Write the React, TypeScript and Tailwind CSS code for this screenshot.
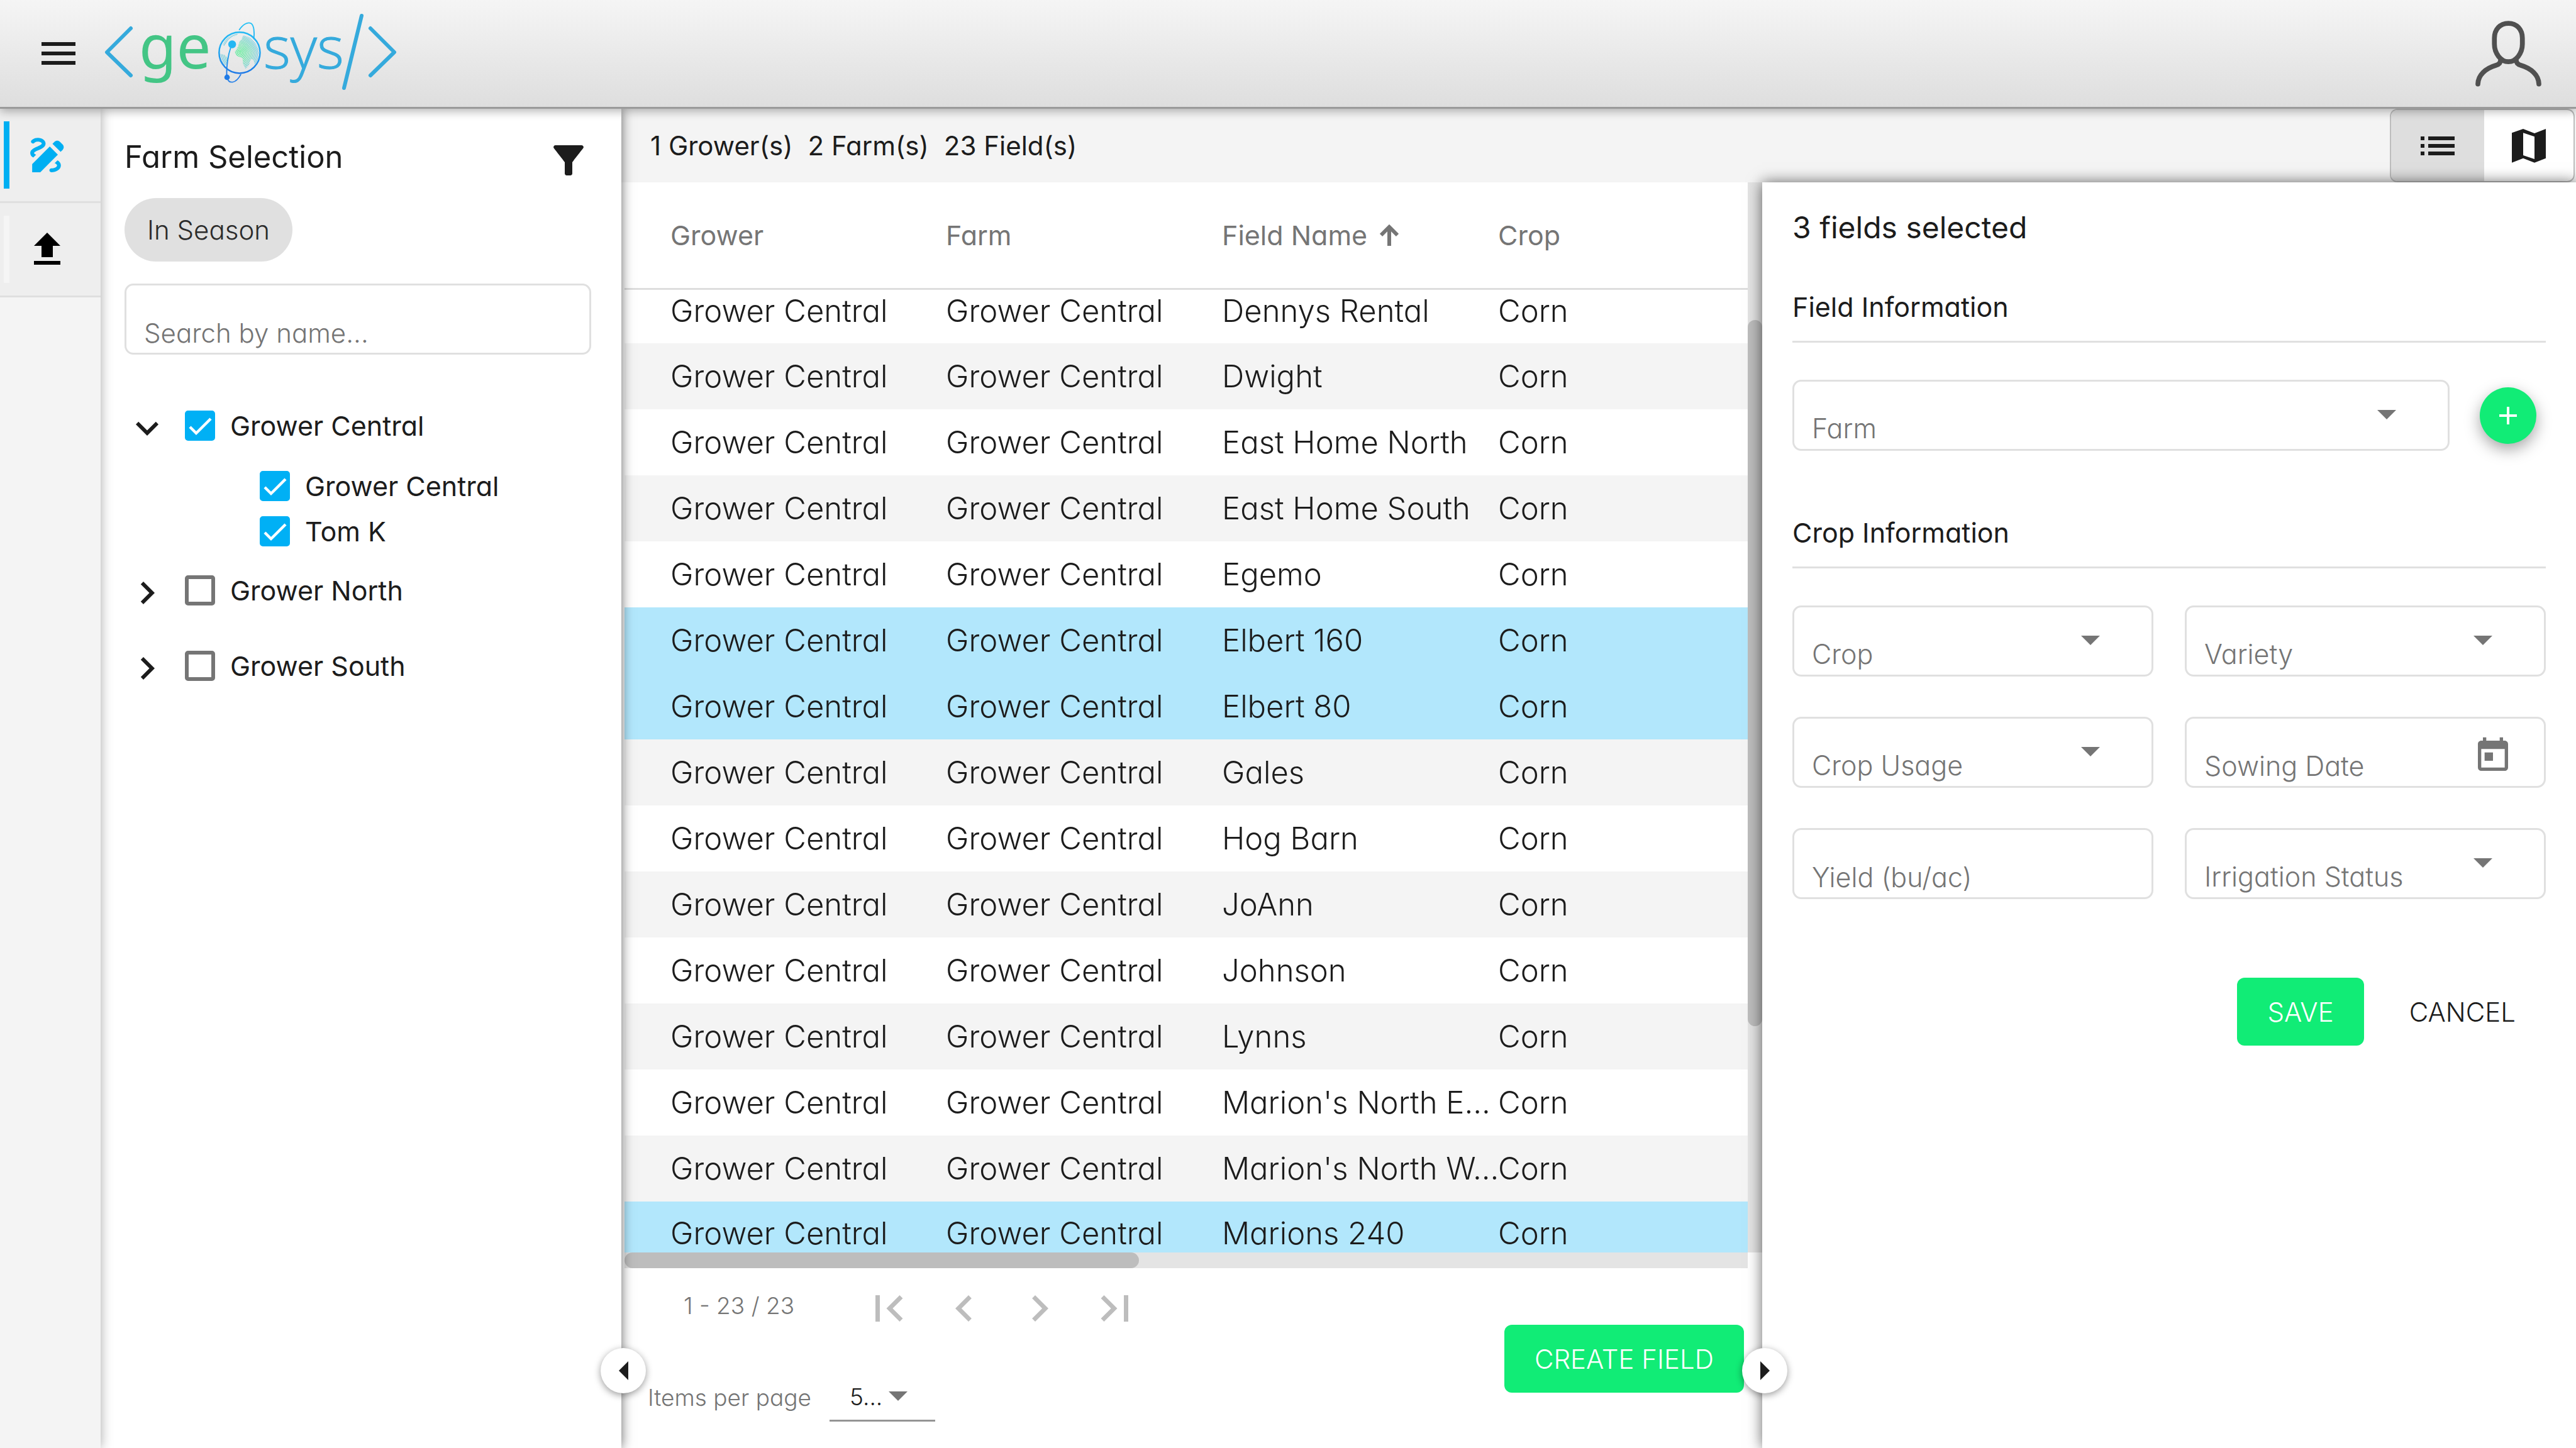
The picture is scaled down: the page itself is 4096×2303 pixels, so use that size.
import React from "react";
import {
  MdChevronLeft,
  MdChevronRight,
  MdDraw,
  MdExpandMore,
  MdFileUpload,
  MdFilterAlt,
  MdFirstPage,
  MdLastPage,
  MdList,
  MdMenu,
  MdToday,
} from "react-icons/md";

type Field = { name: string; selected?: boolean };

const FIELDS: Field[] = [
  { name: "Dennys Rental" },
  { name: "Dwight" },
  { name: "East Home North" },
  { name: "East Home South" },
  { name: "Egemo" },
  { name: "Elbert 160", selected: true },
  { name: "Elbert 80", selected: true },
  { name: "Gales" },
  { name: "Hog Barn" },
  { name: "JoAnn" },
  { name: "Johnson" },
  { name: "Lynns" },
  { name: "Marion's North E..." },
  { name: "Marion's North W..." },
  { name: "Marions 240", selected: true },
];

function Logo() {
  return (
    <svg viewBox="0 0 480 171" className="h-[171px] w-[480px]" role="img" aria-label="geosys">
      <defs>
        <linearGradient id="orbit" x1="0" y1="20" x2="0" y2="335" gradientUnits="userSpaceOnUse">
          <stop offset="0" stopColor="#25c3f5" />
          <stop offset="0.45" stopColor="#1fa9f0" />
          <stop offset="0.85" stopColor="#1f78e6" />
          <stop offset="1" stopColor="#2f86e8" />
        </linearGradient>
        <radialGradient id="land" cx="150" cy="180" r="90" gradientUnits="userSpaceOnUse">
          <stop offset="0" stopColor="#4df08c" />
          <stop offset="0.5" stopColor="#74e3b4" />
          <stop offset="1" stopColor="#7fcfe0" />
        </radialGradient>
        <clipPath id="continents">
          <path d="M122 178 L140 150 L146 125 L158 112 L166 92 C195 92 228 118 244 160 C250 200 240 225 226 240 L218 215 L205 212 L196 245 L178 262 L166 238 L163 208 L134 196 Z" />
          <path d="M62 140 C75 108 105 84 140 82 L132 92 L108 100 L92 112 L70 146 Z" />
          <path d="M50 185 L72 192 L92 212 L86 238 L72 245 C58 228 50 205 50 185 Z" />
        </clipPath>
      </defs>
      <g fill="none" stroke="#35aadc" strokeWidth="6" strokeLinecap="round" strokeLinejoin="round">
        <path d="M48 45 L10 83 L48 120" />
        <path d="M415 25 L387 140" />
        <path d="M429 45 L467 83 L429 120" />
      </g>
      <text x="61" y="109" fontSize="97" fill="#43c585" className="font-['Noto_Sans',sans-serif]">
        ge
      </text>
      <text x="259" y="109" fontSize="92" fill="#35aadc" stroke="#35aadc" strokeWidth="1" className="font-['Open_Sans',sans-serif] font-light">
        sys
      </text>
      <g transform="translate(175 28) scale(.3103)" fill="none" stroke="url(#orbit)" strokeLinecap="round">
        <g clipPath="url(#continents)" stroke="url(#land)" strokeWidth="4">
          {[6, 14, 22, 30, 38, 46, 54, 62, 70, 78, 86, 94, 102, 110].map((r) => (
            <path key={r} d={`M${150 - r} 178 Q${150 - r / 2} ${178 - r} 150 ${178 - r * 0.9} T${150 + r} 178 Q${150 + r * 0.7} ${178 + r} 150 ${178 + r} T${150 - r} 178`} />
          ))}
        </g>
        <circle cx="148" cy="180" r="105" strokeWidth="8" />
        <path d="M147 62 C165 35 190 20 207 30 C222 40 225 75 221 108" strokeWidth="6" />
        <path d="M105 145 C90 190 80 250 82 300" strokeWidth="6" />
        <path d="M84 306 C92 342 128 340 154 292" strokeWidth="6" />
        <circle cx="110" cy="137" r="20" fill="#23b7f3" stroke="none" />
        <circle cx="84" cy="306" r="14" fill="#1f7ae6" stroke="none" />
      </g>
    </svg>
  );
}

function Header() {
  return (
    <header className="relative z-30 flex h-[173px] shrink-0 items-center border-b-3 border-[#9a9a9a] bg-linear-to-b from-[#f5f5f5] to-[#dedede] pr-[55px] pl-[57px] shadow-[0_4px_14px_rgba(0,0,0,0.3)]">
      <button aria-label="Menu" className="mr-[31px]">
        <MdMenu className="size-[72px]" />
      </button>
      <Logo />
      <button aria-label="Account" className="ml-auto">
        <svg viewBox="743 95 340 340" className="size-[105px]" fill="none" stroke="#505050" strokeWidth="25" strokeLinecap="round">
          <path d="M913 108 C870 108 841 140 841 185 V215 C841 262 873 306 913 306 C953 306 985 262 985 215 V185 C985 140 956 108 913 108 Z" />
          <path d="M756 421 C757 375 795 340 850 324 C866 320 873 312 873 296" />
          <path d="M1070 421 C1069 375 1031 340 976 324 C960 320 953 312 953 296" />
        </svg>
      </button>
    </header>
  );
}

function SideNav() {
  return (
    <nav className="relative z-20 w-[160px] bg-[#f4f4f4] shadow-[0_0_18px_rgba(0,0,0,0.35)]">
      <button aria-label="Draw" className="flex h-[150px] w-full items-center border-b-3 border-[#dfdfdf] bg-[#eeeeee] pl-[6px] text-[#00aff2]">
        <span className="h-[107px] w-[9px] bg-[#00aff2]" />
        <MdDraw className="ml-6 size-[73px]" />
      </button>
      <button aria-label="Upload" className="flex h-[150px] w-full items-center border-b-3 border-[#dfdfdf] bg-[#eeeeee] pl-[6px] text-black">
        <span className="h-[107px] w-[9px] bg-[#f5f5f5]" />
        <MdFileUpload className="ml-6 size-[72px]" />
      </button>
    </nav>
  );
}

function TreeCheck({ label, checked }: { label: string; checked?: boolean }) {
  return (
    <label className="flex items-center gap-6 text-[43px] leading-[60px]">
      <span className="grid size-12 place-items-center">
        <input
          type="checkbox"
          defaultChecked={checked}
          className="peer col-start-1 row-start-1 size-12 appearance-none rounded-[5px] border-6 border-[#757575] checked:border-[#00b0f5] checked:bg-[#00b0f5]"
        />
        <svg viewBox="0 0 24 24" className="pointer-events-none col-start-1 row-start-1 hidden size-12 peer-checked:block" fill="none" stroke="#ffffff" strokeWidth="2.2">
          <path d="M4 13 L9 18 L20.5 6.500" />
        </svg>
      </span>
      {label}
    </label>
  );
}

function FarmPanel() {
  return (
    <section className="relative z-10 w-[828px] bg-white pr-12 pl-[38px] shadow-[0_0_18px_rgba(0,0,0,0.6)]">
      <div className="flex items-start justify-between pt-[46px]">
        <h1 className="text-[49px] leading-[62px]">Farm Selection</h1>
        <button aria-label="Filter">
          <MdFilterAlt className="size-[72px]" />
        </button>
      </div>
      <button className="mt-6 h-[101px] rounded-full bg-[#e0e0e0] px-9 text-[42px] font-light text-[#2b2b2b]">In Season</button>
      <input
        aria-label="Search by name"
        placeholder="Search by name..."
        className="mt-[35px] block h-[113px] w-full rounded-[14px] border-3 border-[#e0e0e0] px-7 pt-[44px] text-[42px] font-light placeholder:text-[#757575]"
      />
      <ul className="mt-[73px]">
        <li>
          <div className="flex items-center">
            <button aria-label="Collapse Grower Central" aria-expanded="true" className="mr-6">
              <MdExpandMore className="mt-2 size-[72px]" />
            </button>
            <TreeCheck label="Grower Central" checked />
          </div>
          <ul className="flex flex-col gap-3 pt-[26px] pb-1 pl-[215px]">
            <li>
              <TreeCheck label="Grower Central" checked />
            </li>
            <li>
              <TreeCheck label="Tom K" checked />
            </li>
          </ul>
        </li>
        <li className="flex h-[120px] items-center">
          <button aria-label="Expand Grower North" className="mr-6">
            <MdChevronRight className="mt-2 size-[72px]" />
          </button>
          <TreeCheck label="Grower North" />
        </li>
        <li className="flex h-[120px] items-center">
          <button aria-label="Expand Grower South" className="mr-6">
            <MdChevronRight className="mt-2 size-[72px]" />
          </button>
          <TreeCheck label="Grower South" />
        </li>
      </ul>
      <button aria-label="Collapse farm panel" className="absolute -right-[39px] bottom-[87px] grid size-[72px] place-items-center rounded-full bg-white shadow-[0_3px_12px_rgba(0,0,0,0.4)]">
        <svg viewBox="0 0 15 30" className="h-[30px] w-[15px] fill-[#1c1c1c]">
          <path d="M15 0 V30 L0 15 Z" />
        </svg>
      </button>
    </section>
  );
}

function SummaryBar() {
  return (
    <div className="flex h-[117px] items-stretch bg-[#f4f4f4] pr-0.5 pl-[46px]">
      <p className="flex items-center gap-6 text-[42px]">
        <span>1 Grower(s)</span>
        <span>2 Farm(s)</span>
        <span>23 Field(s)</span>
      </p>
      <div className="ml-auto flex w-[294px] overflow-hidden rounded-[12px] border-2 border-[#bdbdbd] bg-white">
        <button aria-label="List view" className="grid w-[148px] place-items-center bg-[#dedede]">
          <MdList className="size-[72px]" />
        </button>
        <button aria-label="Map view" className="grid flex-1 place-items-center">
          <svg viewBox="0 0 18 18" className="size-[54px] fill-[#1c1c1c]" fillRule="evenodd">
            <path d="M0 2.100 L6 0 L12 2.300 L18 0 V15.600 L12 17.900 L6 15.600 L0 17.900 Z M6 2.100 V14 L12 16 V4.100 Z" />
          </svg>
        </button>
      </div>
    </div>
  );
}

function FieldsTable() {
  return (
    <table className="w-full table-fixed border-collapse text-left whitespace-nowrap">
      <colgroup>
        <col className="w-[511px]" />
        <col className="w-[439px]" />
        <col className="w-[439px]" />
        <col />
      </colgroup>
      <thead>
        <tr className="h-[169px] border-b-3 border-[#dedede] text-[43px] text-[#757575]">
          <th className="pl-[73px] font-normal">Grower</th>
          <th className="font-normal">Farm</th>
          <th className="font-normal">
            <span className="flex items-center gap-5">
              Field Name
              <svg viewBox="0 0 30 34" className="h-[34px] w-[30px]" fill="none" stroke="#757575" strokeWidth="6">
                <path d="M15 34 V5 M2 17 L15 4 L28 17" />
              </svg>
            </span>
          </th>
          <th className="font-normal">Crop</th>
        </tr>
      </thead>
      <tbody className="text-[49px] leading-[60px] font-light">
        {FIELDS.map((field, i) => {
          const height =
            i === 0 ? "h-[87px] [&>td]:pb-4" : i === FIELDS.length - 1 ? "h-[81px] [&>td]:pt-[21px]" : "h-[105px]";
          const fill = field.selected ? "bg-[#b2e7fc]" : i % 2 ? "bg-[#f4f4f4]" : "bg-white";
          return (
            <tr key={field.name} className={`${height} ${fill}`}>
              <td className="pl-[73px]">Grower Central</td>
              <td>Grower Central</td>
              <td>{field.name}</td>
              <td>Corn</td>
            </tr>
          );
        })}
      </tbody>
    </table>
  );
}

function Paginator() {
  return (
    <div className="flex items-start justify-between pr-[29px] pl-[37px]">
      <div className="text-[37px] font-light text-[#757575]">
        <div className="flex items-center pt-[14px] pl-[57px]">
          <span className="w-[284px]">1 - 23 / 23</span>
          <span className="mt-2 flex gap-9 text-[#bdbdbd]">
            <button aria-label="First page">
              <MdFirstPage className="size-[84px]" />
            </button>
            <button aria-label="Previous page">
              <MdChevronLeft className="size-[84px]" />
            </button>
            <button aria-label="Next page">
              <MdChevronRight className="size-[84px]" />
            </button>
            <button aria-label="Last page">
              <MdLastPage className="size-[84px]" />
            </button>
          </span>
        </div>
        <label className="mt-[62px] flex items-center">
          <span className="w-[289px]">Items per page</span>
          <span className="relative">
            <select className="block h-[76px] w-[168px] appearance-none border-b-3 border-[#949494] pl-8 text-[#1c1c1c]">
              <option>5...</option>
            </select>
            <Caret className="top-7 right-11" />
          </span>
        </label>
      </div>
      <button className="mt-[90px] h-[108px] rounded-[12px] bg-[#11ec76] px-12 text-[42px] font-light text-white">CREATE FIELD</button>
    </div>
  );
}

function Caret({ className }: { className: string }) {
  return (
    <svg viewBox="0 0 30 15" className={`pointer-events-none absolute h-[15px] w-[30px] fill-[#757575] ${className}`}>
      <path d="M0 0 H30 L15 15 Z" />
    </svg>
  );
}

function FieldsList() {
  return (
    <section className="min-w-0 bg-white pl-[5px]">
      <div className="flex">
        <div className="min-w-0 flex-1">
          <FieldsTable />
          <div className="h-[25px] bg-[#e4e4e4]">
            <div className="h-full w-[818px] rounded-full bg-[#bdbdbd]" />
          </div>
        </div>
        <div className="mb-[25px] w-[23px] bg-[#e4e4e4] pt-[219px]">
          <div className="h-[1123px] rounded-full bg-[#bdbdbd]" />
        </div>
      </div>
      <Paginator />
    </section>
  );
}

function SelectBox({ label }: { label: string }) {
  return (
    <div className="relative min-w-0 flex-1">
      <select aria-label={label} className="block h-[113px] w-full appearance-none rounded-[14px] border-3 border-[#e0e0e0] bg-white pt-[42px] pl-7 text-[43px] font-light text-[#757575]">
        <option>{label}</option>
      </select>
      <Caret className="top-12 right-[85px]" />
    </div>
  );
}

function TextBox({ label, children }: { label: string; children?: React.ReactNode }) {
  return (
    <div className="relative">
      <input
        aria-label={label}
        placeholder={label}
        className="block h-[113px] w-full rounded-[14px] border-3 border-[#e0e0e0] px-7 pt-[42px] text-[43px] font-light placeholder:text-[#757575]"
      />
      {children}
    </div>
  );
}

function SectionTitle({ children }: { children: React.ReactNode }) {
  return <h3 className="border-b-3 border-[#e0e0e0] pb-6 text-[43px] leading-[60px]">{children}</h3>;
}

function DetailPanel() {
  return (
    <section className="relative z-10 bg-white px-12 pt-10 shadow-[0_0_22px_rgba(0,0,0,0.6)]">
      <h2 className="text-[48px] leading-[64px]">3 fields selected</h2>
      <div className="mt-[64px]">
        <SectionTitle>Field Information</SectionTitle>
      </div>
      <div className="mt-[59px] flex items-center gap-12 pr-[15px]">
        <SelectBox label="Farm" />
        <button aria-label="Add farm" className="grid size-[90px] place-items-center rounded-full bg-[#11ec76] shadow-[0_9px_24px_rgba(0,0,0,0.35)]">
          <svg viewBox="0 0 28 28" className="size-7" stroke="#ffffff" strokeWidth="4">
            <path d="M14 0 V28 M0 14 H28" />
          </svg>
        </button>
      </div>
      <div className="mt-[100px]">
        <SectionTitle>Crop Information</SectionTitle>
      </div>
      <div className="mt-[59px] grid grid-cols-2 gap-x-[50px] gap-y-16">
        <SelectBox label="Crop" />
        <SelectBox label="Variety" />
        <SelectBox label="Crop Usage" />
        <TextBox label="Sowing Date">
          <MdToday className="pointer-events-none absolute top-[30px] right-[52px] size-[64px] text-[#757575]" />
        </TextBox>
        <TextBox label="Yield (bu/ac)" />
        <SelectBox label="Irrigation Status" />
      </div>
      <div className="mt-[125px] flex justify-end gap-6 text-[42px] font-light">
        <button className="h-[108px] rounded-[12px] bg-[#11ec76] px-12 text-white">SAVE</button>
        <button className="h-[108px] px-12">CANCEL</button>
      </div>
      <button aria-label="Collapse detail panel" className="absolute bottom-[87px] -left-8 grid size-[72px] place-items-center rounded-full bg-white shadow-[0_3px_12px_rgba(0,0,0,0.4)]">
        <svg viewBox="0 0 15 30" className="h-[30px] w-[15px] fill-[#1c1c1c]">
          <path d="M0 0 V30 L15 15 Z" />
        </svg>
      </button>
    </section>
  );
}

export default function App() {
  return (
    <div className="flex h-screen flex-col overflow-hidden bg-white font-['Inter',sans-serif] text-[#1c1c1c] [font-feature-settings:'cv11']">
      <Header />
      <div className="flex min-h-0 flex-1">
        <SideNav />
        <FarmPanel />
        <main className="flex min-w-0 flex-1 flex-col">
          <SummaryBar />
          <div className="grid min-h-0 flex-1 grid-cols-[minmax(0,1fr)_1294px]">
            <FieldsList />
            <DetailPanel />
          </div>
        </main>
      </div>
    </div>
  );
}
